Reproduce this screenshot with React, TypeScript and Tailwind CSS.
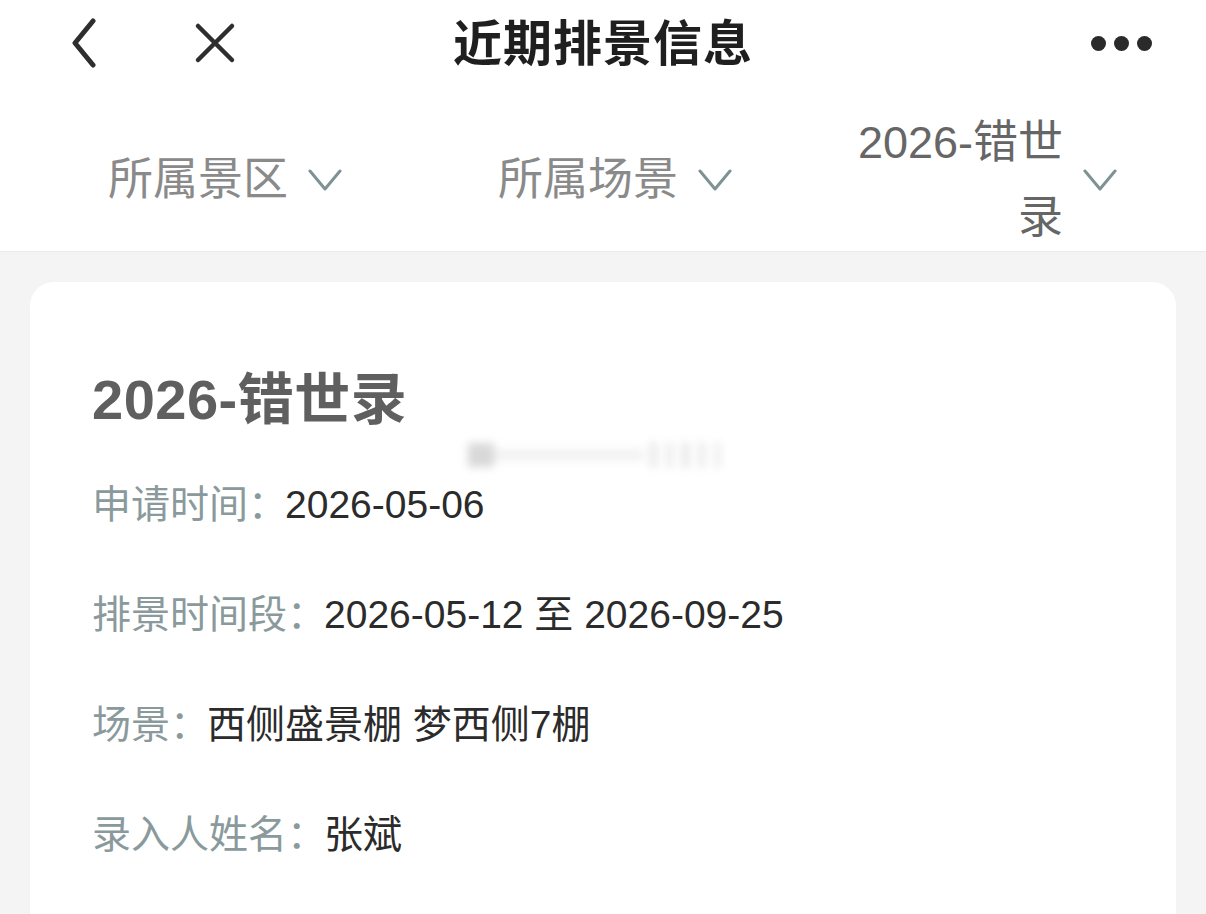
const font = { fontFamily: '"Liberation Sans", "Noto Sans CJK SC", sans-serif' };

function Chevron() {
  return (
    <svg width="34" height="24" viewBox="0 0 34 24" fill="none" className="shrink-0">
      <polyline points="2,3 17,21 32,3" stroke="#7d9293" strokeWidth="3" strokeLinecap="round" strokeLinejoin="round" />
    </svg>
  );
}

const rows = [
  { label: "申请时间：", value: "2026-05-06" },
  { label: "排景时间段：", value: "2026-05-12 至 2026-09-25" },
  { label: "场景：", value: "西侧盛景棚 梦西侧7棚" },
  { label: "录入人姓名：", value: "张斌" },
];

export default function App() {
  return (
    <div className="h-[914px] w-[1206px] overflow-hidden bg-[#f4f4f4]" style={font}>
      <header className="bg-white">
        <div className="relative flex h-[86px] items-center">
          <svg width="30" height="50" viewBox="0 0 30 50" className="ml-[69px]">
            <polyline points="24,3 6,25 24,47" fill="none" stroke="#2e2e2e" strokeWidth="5" strokeLinecap="round" strokeLinejoin="round" />
          </svg>
          <svg width="44" height="44" viewBox="0 0 44 44" className="ml-[94px]">
            <path d="M5 5 L39 39 M39 5 L5 39" stroke="#2e2e2e" strokeWidth="4.5" strokeLinecap="round" />
          </svg>
          <h1 className="absolute left-1/2 top-[16px] -translate-x-1/2 text-[49px] font-bold leading-[56px] tracking-[1px] text-[#1f1f1f]">
            近期排景信息
          </h1>
          <div className="ml-auto mr-[54px] flex items-center gap-[8px]">
            <span className="h-[15px] w-[15px] rounded-full bg-[#2a2a2a]" />
            <span className="h-[15px] w-[15px] rounded-full bg-[#2a2a2a]" />
            <span className="h-[15px] w-[15px] rounded-full bg-[#2a2a2a]" />
          </div>
        </div>
        <div className="flex h-[166px] items-center border-b border-[#ebebeb] pt-[22px]">
          <div className="ml-[108px] flex items-center gap-[20px]">
            <span className="text-[45px] leading-[56px] text-[#8a8a8a]">所属景区</span>
            <Chevron />
          </div>
          <div className="ml-[156px] flex items-center gap-[20px]">
            <span className="text-[45px] leading-[56px] text-[#8a8a8a]">所属场景</span>
            <Chevron />
          </div>
          <div className="ml-[121px] flex items-center gap-[20px]">
            <span className="w-[210px] text-right text-[45px] leading-[75px] text-[#666]">2026-错世录</span>
            <Chevron />
          </div>
        </div>
      </header>

      <main className="relative mx-[30px] mt-[30px] h-[700px] rounded-[24px] bg-white px-[62px] pt-[87px]">
        <h2 className="text-[56px] font-bold leading-[62px] tracking-[0.5px] text-[#5f5f5f]">2026-错世录</h2>
        <div className="absolute left-[438px] top-[158px] flex h-[30px] w-[270px] items-center opacity-70 blur-[4px]">
          <div className="h-[24px] w-[26px] bg-[#c8c8c8]" />
          <div className="h-[12px] w-[150px] bg-[#ededed]" />
          <div className="flex h-[26px] flex-1 gap-[9px] pl-[6px]">
            <div className="w-[7px] bg-[#dedede]" />
            <div className="w-[7px] bg-[#e4e4e4]" />
            <div className="w-[7px] bg-[#dcdcdc]" />
            <div className="w-[7px] bg-[#e2e2e2]" />
            <div className="w-[7px] bg-[#e8e8e8]" />
          </div>
        </div>
        <div className="mt-[54px] flex flex-col gap-[70px]">
          {rows.map((row) => (
            <div key={row.label} className="flex text-[39px] leading-[40px]">
              <span className="text-[#8a9a9c]">{row.label}</span>
              <span className="-ml-[2px] text-[#2b2b2b]">{row.value}</span>
            </div>
          ))}
        </div>
      </main>
    </div>
  );
}
